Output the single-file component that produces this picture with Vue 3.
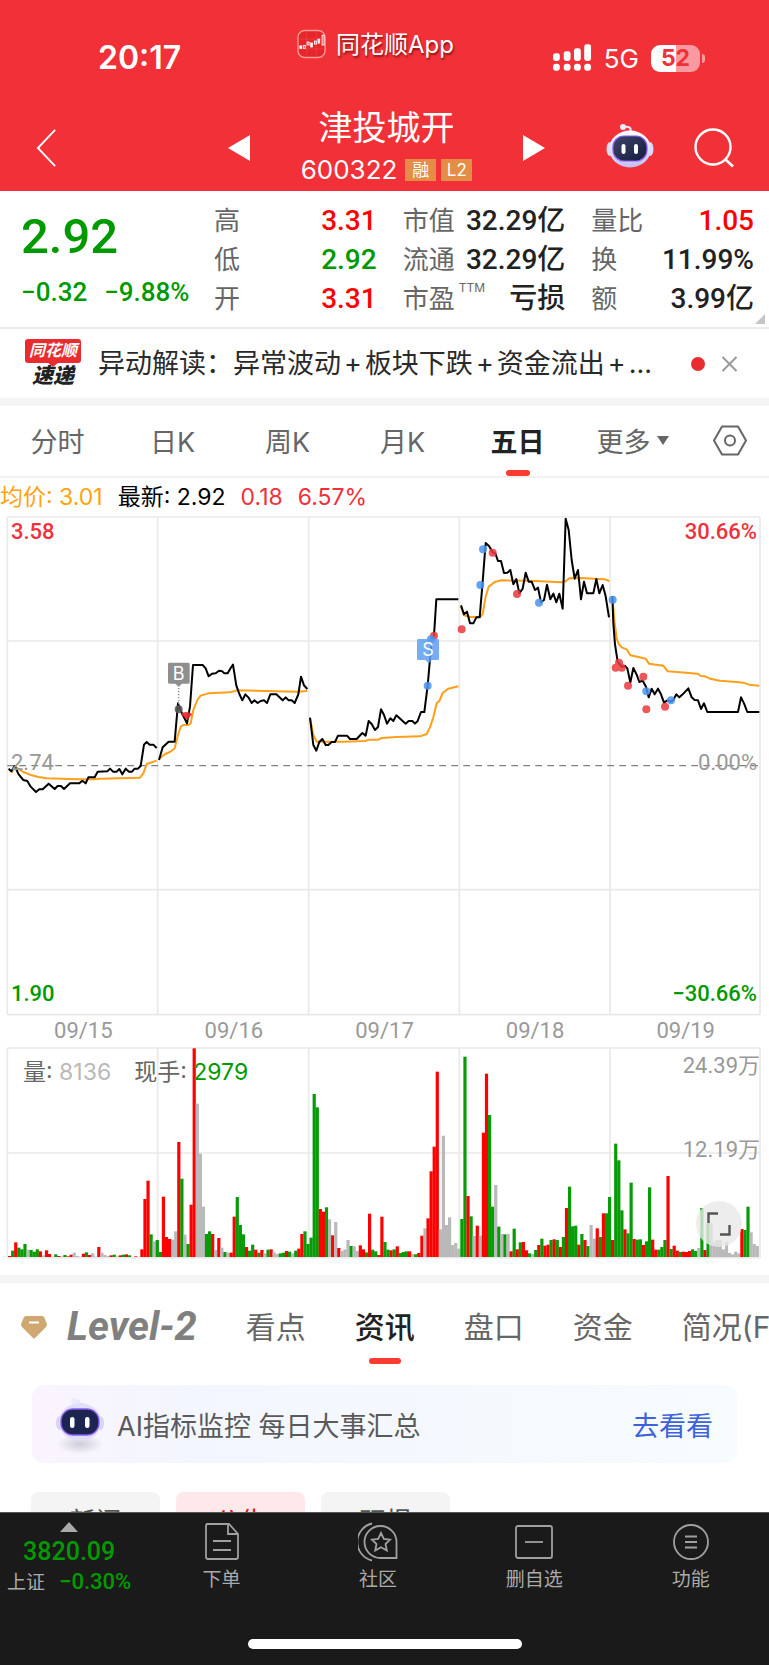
<script setup>
const quote = [
  { label: '高', value: '3.31', tone: 'up' },
  { label: '市值', value: '32.29亿' },
  { label: '量比', value: '1.05', tone: 'up' },
  { label: '低', value: '2.92', tone: 'down' },
  { label: '流通', value: '32.29亿' },
  { label: '换', value: '11.99%' },
  { label: '开', value: '3.31', tone: 'up' },
  { label: '市盈', sup: 'TTM', value: '亏损' },
  { label: '额', value: '3.99亿' },
]
const headline = ['异动解读：异常波动', '板块下跌', '资金流出']
const periods = ['分时', '日K', '周K', '月K', '五日', '更多']
const dates = ['09/15', '09/16', '09/17', '09/18', '09/19']
const sections = ['看点', '资讯', '盘口', '资金', '简况(F10)']
const chips = ['新闻', '公告', '研报']

const gridX = [22, 473, 926, 1378, 1830, 2280]

const price = [
  { shift: 0, points: '26,776 34,784 44,768 56,793 70,810 82,813 92,830 108,846 118,838 128,838 146,821 164,837 173,828 183,828 192,837 210,820 238,820 247,812 257,820 265,802 284,802 293,785 322,784 330,776 339,785 350,785 358,777 367,793 377,776 387,785 396,785 404,776 414,776 422,768 432,704 440,696 449,704 460,704 470,714' },
  { shift: 0, points: '477,750 488,712 506,695 524,695 534,580 541,600 550,618 561,640 570,590 579,465 608,465 617,475 626,499 636,491 647,490 657,482 667,484 673,490 683,490 692,474 699,464 709,527 718,552 727,571 736,553 745,562 755,579 763,571 773,579 782,573 792,571 801,579 811,553 829,553 848,571 857,562 866,571 875,571 884,579 895,553 903,500 912,526 922,537' },
  { shift: 900, points: '30,623 40,705 49,722 58,696 67,687 77,705 85,705 95,696 105,696 114,677 141,677 150,687 170,687 187,669 197,677 206,633 215,642 225,660 234,651 243,598 252,615 261,641 271,625 280,633 289,616 317,641 326,633 337,633 345,641 353,633 363,606 373,606 383,527 395,390 402,377 409,268 475,268' },
  { shift: 1350, points: '33,286 42,313 51,305 60,340 70,340 79,322 89,322 98,215 107,99 117,108 128,127 136,130 144,153 153,153 162,189 172,188 181,180 190,223 199,207 208,250 218,236 227,188 236,215 245,215 255,240 264,233 273,277 282,270 291,224 301,268 310,251 319,277 328,251 338,296 347,26 356,60 365,150 374,206 384,180 393,268 402,215 411,250 430,250 439,207 448,250 458,225 467,259 477,322' },
  { shift: 1350, points: '487,258 490,340 495,403 503,455 515,470 525,468 532,475 541,518 550,474 560,494 568,516 578,512 588,530 596,562 605,536 614,553 624,536 633,553 642,578 652,571 662,575 670,570 679,553 688,562 698,553 715,535 725,562 734,570 744,571 753,597 762,580 772,606 864,606 873,562 882,580 892,606 928,606' },
]
const average = [
  { shift: 0, points: '26,778 36,786 44,770 70,786 90,794 115,801 140,805 230,808 280,808 300,806 420,803 430,790 440,762 470,752' },
  { shift: 0, points: '478,746 495,732 510,726 524,715 534,675 542,650 550,645 565,645 572,640 580,600 592,570 602,557 625,550 690,547 710,541 890,545 922,543' },
  { shift: 900, points: '31,628 40,675 50,695 130,695 195,693 208,689 235,689 245,684 290,681 360,679 380,672 390,652 400,622 410,580 418,573 428,549 445,536 475,529' },
  { shift: 1350, points: '33,290 42,316 60,321 90,321 98,312 107,260 116,230 136,215 155,211 240,212 335,217 347,214 358,205 395,204 445,207 465,208 478,213' },
  { shift: 1350, points: '488,270 493,330 500,385 506,402 515,412 530,418 541,436 565,441 587,446 597,461 640,467 653,484 690,487 743,491 753,498 765,499 780,506 810,512 860,516 880,518 897,524 928,527' },
]
const sells = [[1283, 527], [1293, 388], [1449, 118], [1441, 225], [1617, 278], [1838, 269], [1939, 544], [2013, 571]]
const buys = [[1302, 377], [1478, 128], [1385, 358], [1551, 252], [1847, 473], [1857, 458], [1865, 473], [1884, 527], [1930, 500], [1939, 598], [1995, 590]]

const tones = { r: '#fe0000', g: '#079b07', x: '#b9b9b9' }
const base = 831
const raw = `
r828 g812 r787 g803 g808 g792 x809 g810 g815 g808 r814 x826 r811 r822 x830 g823 r828 x829 g825 r829 r824 x818 x828 x830 r821 g817 r825 x820 x830 r801 x818 x825 x828 r826 g824 x829 r826 g824 r823 g826 x831 r829 x830 r808 r657 r602 g763 x784 g780
g816 r650 r771 r777 x779 x754 r486 g596 x764 g792 r674 r205 x371 x521 x680 g762 g754 r762 x810 r774 x803 g816 x818 r818 r710 g651 g735 g763 r801 g812 g794 r809 g818 r810 x820 g809 r808 x817 x822 g820 g818 r813 g815 x820 g812 r806 r762 g754 g792 g773
g342 g382 r687 r695 g682 x718 r766 x726 r804 x813 x808 x780 g798 x799 x813 r796 r808 g817 r701 g809 g814 r825 r710 g786 g809 r811 g808 r799 g819 g816 g814 r814 x822 g823 r819 r767 x745 r715 r574 r500 r275 x748 x467 x735 x712 x795 x789 x806
g717 g230 r648 g709 x768 r737 x767 r458 r281 g405 g680 x615 g740 x762 g763 x762 r814 g746 r808 g787 r786 r811 g820 x822 g810 r795 g776 r797 r794 g780 r778 g780 r801 g771 r684 g620 g739 g737 r794 g762 r780 g798 x735 x776 r745 g771 r700 g700 g651
r780 g491 g541 g691 r748 g760 g608 r777 g779 g778 r795 g784 g622 r779 r809 g809 g801 g780 r588 g807 r797 r812 g816 r815 r816 r813 g808 g813 x804 g684 r810 g729 x729 x785 x780 x780 x808 x785 x819 x823 x815 x820 r747 g750 g680 x757 x792 x798`
const cells = raw.trim().split(/\s+/)
const step = (2272 - 29) / (cells.length - 1)
const bars = cells.map((cell, i) => {
  const top = Number(cell.slice(1))
  return { x: 29 + i * step - 5, y: top, h: base - top, fill: tones[cell[0]] }
})
</script>

<template>
  <div class="page">
    <header class="top">
      <div class="status">
        <span class="clock">20:17</span>
        <div class="island">
          <svg class="app-icon" viewBox="0 0 30 30" aria-hidden="true">
            <rect x="1" y="1" width="28" height="28" rx="7" fill="#e5262b" stroke="#ff9a98" stroke-width="1.4" />
            <path d="M3 10H27M3 20H27M10 3V27M20 3V27" stroke="#f1484b" stroke-width=".6" />
            <g fill="#fff" stroke="#fff" stroke-width="1">
              <rect x="3" y="17" width="1.6" height="2.5" /><rect x="6.5" y="16.5" width="2" height="3" fill="none" />
              <rect x="10.5" y="13" width="2" height="3" fill="none" /><rect x="14.2" y="14" width="1.6" height="4" />
              <rect x="18" y="12" width="2" height="3" fill="none" /><rect x="21.8" y="10" width="1.6" height="4" />
              <rect x="26" y="6" width="2" height="10" fill="none" />
            </g>
          </svg>
          <span>同花顺App</span>
        </div>
        <div class="radio">
          <svg class="signal" viewBox="0 0 40 28" aria-hidden="true">
            <g fill="#fff">
              <rect x="0" y="9" width="7" height="8" rx="2.5" /><rect x="11" y="7" width="7" height="10" rx="2.5" />
              <rect x="21.5" y="4" width="7" height="13" rx="2.5" /><rect x="32" y="0" width="7" height="17" rx="2.5" />
              <rect x="0" y="20" width="7" height="7" rx="3" /><rect x="11" y="20" width="7" height="7" rx="3" />
              <rect x="21.5" y="20" width="7" height="7" rx="3" /><rect x="32" y="20" width="7" height="7" rx="3" />
            </g>
          </svg>
          <span class="net">5G</span>
          <span class="battery"><b>5</b><b>2</b></span>
        </div>
      </div>
      <div class="nav">
        <button class="back" aria-label="返回">
          <svg viewBox="0 0 22 40"><path d="M20 1L2 20L20 39" fill="none" stroke="#fff" stroke-width="2" /></svg>
        </button>
        <button class="step" aria-label="上一只"><svg viewBox="0 0 22 26"><path d="M22 0V26L0 13Z" fill="#fff" /></svg></button>
        <div class="title">
          <h1>津投城开</h1>
          <p><span>600322</span><i>融</i><i>L2</i></p>
        </div>
        <button class="step" aria-label="下一只"><svg viewBox="0 0 22 26"><path d="M0 0V26L22 13Z" fill="#fff" /></svg></button>
        <button class="bot" aria-label="助手">
          <svg viewBox="0 0 48 46">
            <defs>
              <linearGradient id="shell" x1="0" y1="0" x2="0" y2="1"><stop offset="0" stop-color="#fff" /><stop offset="1" stop-color="#c3bff0" /></linearGradient>
              <linearGradient id="visor" x1="0" y1="0" x2="1" y2="1"><stop offset="0" stop-color="#3d4468" /><stop offset="1" stop-color="#141b3c" /></linearGradient>
            </defs>
            <path d="M24 9C26 5 23 3 18 4" fill="none" stroke="#e5e3fb" stroke-width="2" /><circle cx="17" cy="4" r="3" fill="#eceafd" />
            <ellipse cx="4" cy="26" rx="3.5" ry="7" fill="#d9d9fa" /><ellipse cx="44" cy="26" rx="3.5" ry="7" fill="#d9d9fa" />
            <ellipse cx="24" cy="26" rx="21" ry="18.5" fill="url(#shell)" />
            <rect x="7" y="13" width="34" height="25" rx="11" fill="url(#visor)" stroke="#8a5cf0" stroke-width="1.2" />
            <rect x="15.500" y="21" width="4" height="10" rx="2" fill="#fff" /><rect x="28" y="21" width="4" height="10" rx="2" fill="#fff" />
          </svg>
        </button>
        <button class="find" aria-label="搜索">
          <svg viewBox="0 0 40 40"><circle cx="19" cy="19" r="17.5" fill="none" stroke="#fff" stroke-width="2.4" /><path d="M31 31L39 38.5" stroke="#fff" stroke-width="2.6" /></svg>
        </button>
      </div>
    </header>

    <section class="quote">
      <div class="last down">
        <strong>2.92</strong>
        <p><span>−0.32</span><span>−9.88%</span></p>
      </div>
      <dl>
        <div v-for="q in quote" :key="q.label">
          <dt>{{ q.label }}<sup v-if="q.sup">{{ q.sup }}</sup></dt>
          <dd :class="q.tone">{{ q.value }}</dd>
        </div>
      </dl>
      <i class="corner"></i>
    </section>

    <section class="express">
      <div class="brand"><b>同花顺</b><em>速递</em></div>
      <a href="#news"><template v-for="part in headline" :key="part">{{ part }}<span class="plus">+</span></template>...</a>
      <i class="dot"></i>
      <button class="close" aria-label="关闭">
        <svg viewBox="0 0 16 16"><path d="M1 1L15 15M15 1L1 15" stroke="#999" stroke-width="2" /></svg>
      </button>
    </section>

    <nav class="periods">
      <button v-for="p in periods" :key="p" :class="{ on: p === '五日' }">{{ p }}<i v-if="p === '更多'" class="caret"></i></button>
      <button aria-label="设置">
        <svg class="hex" viewBox="0 0 34 31"><path d="M9 1.5H25L33 15.5L25 29.5H9L1 15.5Z" fill="none" stroke="#666" stroke-width="2" stroke-linejoin="round" /><circle cx="17" cy="15.5" r="5" fill="none" stroke="#666" stroke-width="2" /></svg>
      </button>
    </nav>

    <p class="legend"><span class="avg">均价: 3.01</span><span>最新: 2.92</span><span class="rise">0.18</span><span class="rise">6.57%</span></p>

    <section class="chart">
      <svg viewBox="0 0 2307 1518" aria-hidden="true">
        <g stroke="#e9e9e9" stroke-width="5">
          <path v-for="x in gridX" :key="x" :d="`M${x} 21V1514`" />
          <path d="M22 21H2280M22 393H2280M22 1139H2280M22 1514H2280" />
        </g>
        <path d="M22 767H2280" stroke="#808080" stroke-width="4" stroke-dasharray="20 16" />
        <g fill="none" stroke="#ff9f1a" stroke-width="6" stroke-linejoin="round">
          <polyline v-for="(l, i) in average" :key="i" :points="l.points" :transform="`translate(${l.shift} 0)`" />
        </g>
        <g fill="none" stroke="#000" stroke-width="6" stroke-linejoin="round">
          <polyline v-for="(l, i) in price" :key="i" :points="l.points" :transform="`translate(${l.shift} 0)`" />
        </g>
        <path d="M536 525V598" stroke="#888" stroke-width="4" stroke-dasharray="4 5" />
        <circle cx="536" cy="598" r="12" fill="#555" opacity=".85" />
        <path d="M542 612Q558 600 577 612L562 630Z" fill="#e8262b" opacity=".9" />
        <g fill="#ea3a3e" opacity=".85"><circle v-for="(d, i) in buys" :key="i" :cx="d[0]" :cy="d[1]" r="12" /></g>
        <g fill="#4a94f0" opacity=".85"><circle v-for="(d, i) in sells" :key="i" :cx="d[0]" :cy="d[1]" r="12" /></g>
        <path d="M508 458H565Q569 458 569 462V517Q569 521 565 521H546L536 530L526 521H508Q504 521 504 517V462Q504 458 508 458Z" fill="#8f8f8f" />
        <path d="M1255 387H1313Q1317 387 1317 391V446Q1317 450 1313 450H1296L1286 460L1276 450H1255Q1251 450 1251 446V391Q1251 387 1255 387Z" fill="#5e9ff2" opacity=".85" />
        <text x="536" y="510" class="flag">B</text>
        <text x="1284" y="439" class="flag">S</text>
      </svg>
      <span class="lab tl rise">3.58</span><span class="lab tr rise">30.66%</span>
      <span class="lab ml">2.74</span><span class="lab mr">0.00%</span>
      <span class="lab bl down">1.90</span><span class="lab br down">−30.66%</span>
    </section>
    <div class="dates"><span v-for="d in dates" :key="d">{{ d }}</span></div>

    <section class="volume">
      <svg viewBox="0 195 2307 642" aria-hidden="true">
        <g stroke="#e9e9e9" stroke-width="5">
          <path v-for="x in gridX" :key="x" :d="`M${x} 204V833`" />
          <path d="M22 204H2280M22 519H2280M22 833H2280" />
        </g>
        <rect v-for="(b, i) in bars" :key="i" :x="b.x" :y="b.y" width="9.6" :height="b.h" :fill="b.fill" />
      </svg>
      <p class="now">量: <span class="muted">8136</span><span class="hand">现手: <span class="down">2979</span></span></p>
      <span class="scale full">24.39万</span><span class="scale half">12.19万</span>
      <button class="expand" aria-label="全屏">
        <svg viewBox="0 0 24 24"><path d="M1.5 11V1.5H11M22.5 13V22.5H13" fill="none" stroke="#555" stroke-width="2.4" /></svg>
      </button>
    </section>

    <nav class="sections">
      <svg class="gem" viewBox="0 0 28 24" aria-hidden="true"><path d="M6 1H22Q23 1 24 2L27 9Q27 11 26 12L15 23Q14 24 13 23L2 12Q1 11 1 9L4 2Q5 1 6 1Z" fill="#cfa871" /><path d="M9 7.5H19" stroke="#fff" stroke-width="2" /></svg>
      <a href="#level2" class="level">Level-2</a>
      <a v-for="s in sections" :key="s" href="#section" :class="{ on: s === '资讯' }">{{ s }}</a>
    </nav>

    <section class="banner">
      <svg viewBox="0 -3 48 60" aria-hidden="true">
        <defs><radialGradient id="shade"><stop offset="0" stop-color="#cfcdda" /><stop offset="1" stop-color="#cfcdda" stop-opacity="0" /></radialGradient></defs>
        <ellipse cx="24" cy="47" rx="23" ry="10" fill="url(#shade)" />
        <path d="M23 9C25 5 23 3 18 4" fill="none" stroke="#e5e3fb" stroke-width="2" /><circle cx="18" cy="4" r="3" fill="#eceafd" />
        <ellipse cx="4" cy="26" rx="4" ry="7" fill="#d4d3f8" /><ellipse cx="44" cy="26" rx="4" ry="7" fill="#d4d3f8" />
        <ellipse cx="24" cy="25" rx="21" ry="19" fill="#e0defa" />
        <rect x="5" y="12" width="38" height="26" rx="12" fill="#1c2450" stroke="#8a5cf0" stroke-width="1.4" />
        <rect x="14" y="20" width="4.5" height="11" rx="2.2" fill="#fff" /><rect x="29" y="20" width="4.5" height="11" rx="2.2" fill="#fff" />
      </svg>
      <span>AI指标监控 每日大事汇总</span>
      <a href="#ai">去看看</a>
    </section>

    <div class="chips"><button v-for="c in chips" :key="c" :class="{ on: c === '公告' }">{{ c }}</button></div>

    <footer class="dock">
      <div class="actions">
        <button class="index">
          <i></i><b>3820.09</b><span>上证<em>−0.30%</em></span>
        </button>
        <button>
          <svg viewBox="0 0 40 40"><path d="M4 2H27L36 12V35Q36 37 34 37H6Q4 37 4 35V4Q4 2 6 2M26 2V12H36M11 19H29M11 28H29" /></svg>
          下单
        </button>
        <button>
          <svg viewBox="0 0 40 40"><path d="M14 1.5A19 19 0 0 0 14 38.5M38.5 36H23A16 16 0 1 1 38.5 20ZM23 11L25.8 17L32 17.7L27.5 22L28.8 28.5L23 25.3L17.2 28.5L18.5 22L14 17.7L20.2 17Z" /></svg>
          社区
        </button>
        <button>
          <svg viewBox="0 0 40 40"><rect x="2" y="4" width="36" height="32" rx="2" /><path d="M11 20H29" /></svg>
          删自选
        </button>
        <button>
          <svg viewBox="0 0 40 40"><circle cx="20" cy="20" r="17" /><path d="M14 14.5H26M14 20H26M14 25.5H26" /></svg>
          功能
        </button>
      </div>
      <div class="home"></div>
    </footer>
  </div>
</template>

<style>
body { margin: 0; background: #fff; }
</style>

<style scoped>
.page { font-family: Inter, "Noto Sans CJK SC", sans-serif; color: #222; background: #fff; overflow-x: hidden; }
.page * { box-sizing: border-box; }
p, h1, dl, dd { margin: 0; }
button { border: 0; padding: 0; background: none; font: inherit; color: inherit; }
a { color: inherit; text-decoration: none; }
i, em { font-style: normal; }
svg { display: block; }
.up { color: #fe0000; }
.down { color: #009a00; }
.rise { color: #f0303a; }

.top { background: #f13038; color: #fff; height: 191px; }
.status { display: grid; grid-template-columns: 1fr auto 1fr; height: 104px; padding: 0 69px 0 51px; }
.clock { font-size: 32px; line-height: 36px; font-weight: 600; padding: 40px 0 0 47px; }
.island { display: flex; gap: 10px; height: 30px; margin-top: 29px; font-size: 24px; line-height: 32px; text-shadow: 1px 2px 2px rgba(80, 0, 0, .6); }
.app-icon { width: 29px; height: 30px; }
.radio { display: flex; justify-content: flex-end; align-items: center; height: 28px; margin-top: 44px; }
.signal { width: 39px; height: 28px; }
.net { font-size: 26px; margin: 0 12px; }
.battery { position: relative; display: flex; justify-content: center; width: 49px; height: 27px; border-radius: 9px; background: linear-gradient(90deg, #fff 52%, #f89a9f 52%); color: #f13038; font-size: 23px; line-height: 27px; }
.battery b { font-weight: 700; }
.battery::after { content: ""; position: absolute; right: -5px; top: 9px; width: 3px; height: 9px; border-radius: 0 3px 3px 0; background: #f89a9f; }
.nav { display: grid; grid-template-columns: 192px 22px 1fr 22px 61px 48px 115px; align-items: center; height: 87px; padding-left: 36px; }
.back, .step, .bot, .find { height: 66px; display: flex; align-items: center; }
.back svg { width: 21px; height: 40px; }
.step svg { width: 22px; height: 26px; }
.bot { grid-column: 6; padding-bottom: 4px; }
.bot svg { width: 48px; height: 46px; }
.find { padding-left: 40px; }
.find svg { width: 40px; height: 40px; }
.title { text-align: center; }
.title h1 { font-size: 34px; line-height: 40px; font-weight: 400; padding-bottom: 4px; }
.title p { display: flex; justify-content: center; align-items: center; gap: 5px; line-height: 36px; font-size: 26px; }
.title p span { margin-right: 3px; }
.title i { width: 31px; height: 22px; background: #e38d46; font-size: 17px; line-height: 22px; }

.quote { position: relative; display: grid; grid-template-columns: 193px 1fr; height: 138px; padding: 10px 15px 0 21px; border-bottom: 2px solid #ececec; }
.last { font-family: Roboto, sans-serif; font-weight: 500; }
.last strong { display: block; font-size: 49px; line-height: 72px; font-weight: 500; }
.last p { display: flex; gap: 17px; font-size: 26px; line-height: 38px; }
.quote dl { display: grid; grid-template-columns: repeat(3, 1fr); column-gap: 26px; height: 117px; }
.quote dl div { display: flex; justify-content: space-between; line-height: 39px; }
.quote dt { position: relative; font-size: 26px; color: #666; white-space: nowrap; }
.quote sup { position: absolute; left: 56px; top: 1px; font-size: 12px; line-height: 16px; }
.quote dd { font-family: Roboto, "Noto Sans CJK SC", sans-serif; font-weight: 500; font-size: 28px; white-space: nowrap; }
.corner { position: absolute; right: 4px; bottom: 3px; border-left: 10px solid transparent; border-bottom: 10px solid #c4c4c4; }

.express { display: flex; align-items: center; height: 77px; padding: 0 31px 0 24px; border-bottom: 8px solid #f4f4f4; }
.brand { display: flex; flex-direction: column; align-items: center; width: 58px; margin-right: 16px; }
.brand b { position: relative; width: 56px; height: 24px; border-radius: 3px; background: #e92c30; color: #fff; font-size: 16px; line-height: 23px; font-style: italic; text-align: center; }
.brand b::after { content: ""; position: absolute; left: 22px; top: 23px; border: 6px solid transparent; border-top: 5px solid #e92c30; border-bottom: 0; }
.brand em { font-size: 21px; line-height: 25px; font-weight: 900; font-style: italic; }
.express a { flex: 1; font-size: 27px; line-height: 38px; white-space: nowrap; color: #2a2a2a; }
.plus { margin: 0 3px; }
.dot { width: 14px; height: 14px; border-radius: 50%; background: #e92c30; margin-right: 16px; }
.close svg { width: 17px; height: 16px; }

.periods { display: grid; grid-template-columns: repeat(6, 115fr) 79fr; height: 72px; border-bottom: 2px solid #f0f0f0; font-size: 27px; color: #666; }
.periods button { position: relative; display: flex; align-items: center; justify-content: center; padding-bottom: 2px; }
.periods .on { font-weight: 700; color: #222; }
.on::after { content: ""; position: absolute; left: 50%; bottom: 0; width: 24px; height: 6px; margin-left: -12px; border-radius: 3px; background: #fb3a30; }
.caret { border: 6px solid transparent; border-top: 9px solid #666; border-bottom: 0; margin-left: 6px; }
.hex { width: 34px; height: 31px; }

.legend { display: flex; gap: 15px; height: 32px; font-size: 23px; line-height: 39px; color: #000; white-space: nowrap; }
.avg { color: #ffa40d; }
.chart, .volume { position: relative; }
.chart svg, .volume > svg { width: 100%; height: auto; }
.flag { font-family: Inter, sans-serif; font-size: 54px; fill: #fff; text-anchor: middle; }
.lab { position: absolute; font-family: Roboto, sans-serif; font-weight: 500; font-size: 22px; line-height: 24px; color: #999; }
.tl, .ml, .bl { left: 11px; }
.tr, .mr, .br { right: 12px; }
.tl, .tr { top: 10px; }
.ml, .mr { top: 241px; font-weight: 400; }
.bl, .br { bottom: 10px; }
.rise.lab { color: #f0303a; }
.down.lab { color: #009a00; }
.dates { display: grid; grid-template-columns: repeat(5, 1fr); height: 29px; padding: 0 8px; text-align: center; font-family: Roboto, sans-serif; font-size: 22px; line-height: 30px; color: #999; }
.now { position: absolute; left: 23px; top: 12px; font-size: 23px; line-height: 30px; color: #666; white-space: nowrap; }
.muted { color: #b9b9b9; }
.hand { margin-left: 23px; }
.scale { position: absolute; right: 9px; font-family: Roboto, "Noto Sans CJK SC", sans-serif; font-size: 22px; line-height: 28px; color: #999; }
.full { top: 7px; }
.half { top: 91px; }
.expand { position: absolute; right: 27px; bottom: 12px; width: 46px; height: 46px; border-radius: 50%; background: rgba(232, 232, 232, .8); display: flex; align-items: center; justify-content: center; }
.expand svg { width: 24px; height: 24px; }

.sections { display: flex; align-items: center; gap: 49px; height: 110px; margin-top: 16px; border-top: 8px solid #f4f4f4; padding: 0 0 15px 20px; font-size: 30px; color: #666; white-space: nowrap; overflow: hidden; }
.sections a { position: relative; flex: none; line-height: 44px; }
.gem { flex: none; width: 28px; height: 26px; margin-right: -30px; }
.sections .level { font-family: Roboto, sans-serif; font-style: italic; font-weight: 700; font-size: 40px; color: #808080; }
.sections .on { font-weight: 500; color: #222; }
.sections .on::after { bottom: -15px; width: 32px; margin-left: -16px; }

.banner { display: flex; align-items: center; height: 78px; margin: 0 32px; padding: 0 24px; border-radius: 12px; background: linear-gradient(90deg, #faf4fd, #f3f6fe 22%, #f6fcff); font-size: 27px; color: #5a5a5a; }
.banner svg { width: 48px; height: 60px; margin-right: 13px; }
.banner span { flex: 1; white-space: nowrap; }
.banner a { color: #3d62dc; }
.chips { display: flex; gap: 16px; padding: 29px 31px 0; font-size: 26px; color: #555; }
.chips button { position: relative; width: 129px; height: 54px; border-radius: 8px; background: #f4f4f4; }
.chips .on { background: #ffe8ea; color: #e8121c; }
.chips .on::after { content: none; }

.dock { position: fixed; left: 0; right: 0; bottom: 0; height: 153px; background: #1a1a1a; border-top: 1px solid #555; }
.actions { display: grid; grid-template-columns: 143fr repeat(4, 156fr); height: 126px; color: #aaa; font-size: 19px; }
.actions button { display: flex; flex-direction: column; align-items: center; line-height: 26px; padding-top: 9px; height: 90px; }
.actions svg { width: 40px; height: 40px; margin-bottom: 5px; fill: none; stroke: #a0a0a0; stroke-width: 1.8; }
.actions .index { padding-right: 5px; white-space: nowrap; }
.index i { border: 9px solid transparent; border-bottom: 10px solid #aaa; border-top: 0; margin-bottom: 6px; }
.index b { font-family: Roboto, sans-serif; font-size: 25px; line-height: 28px; font-weight: 500; color: #009a00; }
.index span { margin-top: 2px; line-height: 28px; }
.index em { font-family: Roboto, sans-serif; font-weight: 500; font-size: 22px; color: #009a00; margin-left: 14px; }
.home { width: 274px; height: 10px; margin: 0 auto; border-radius: 5px; background: #fff; }
</style>
